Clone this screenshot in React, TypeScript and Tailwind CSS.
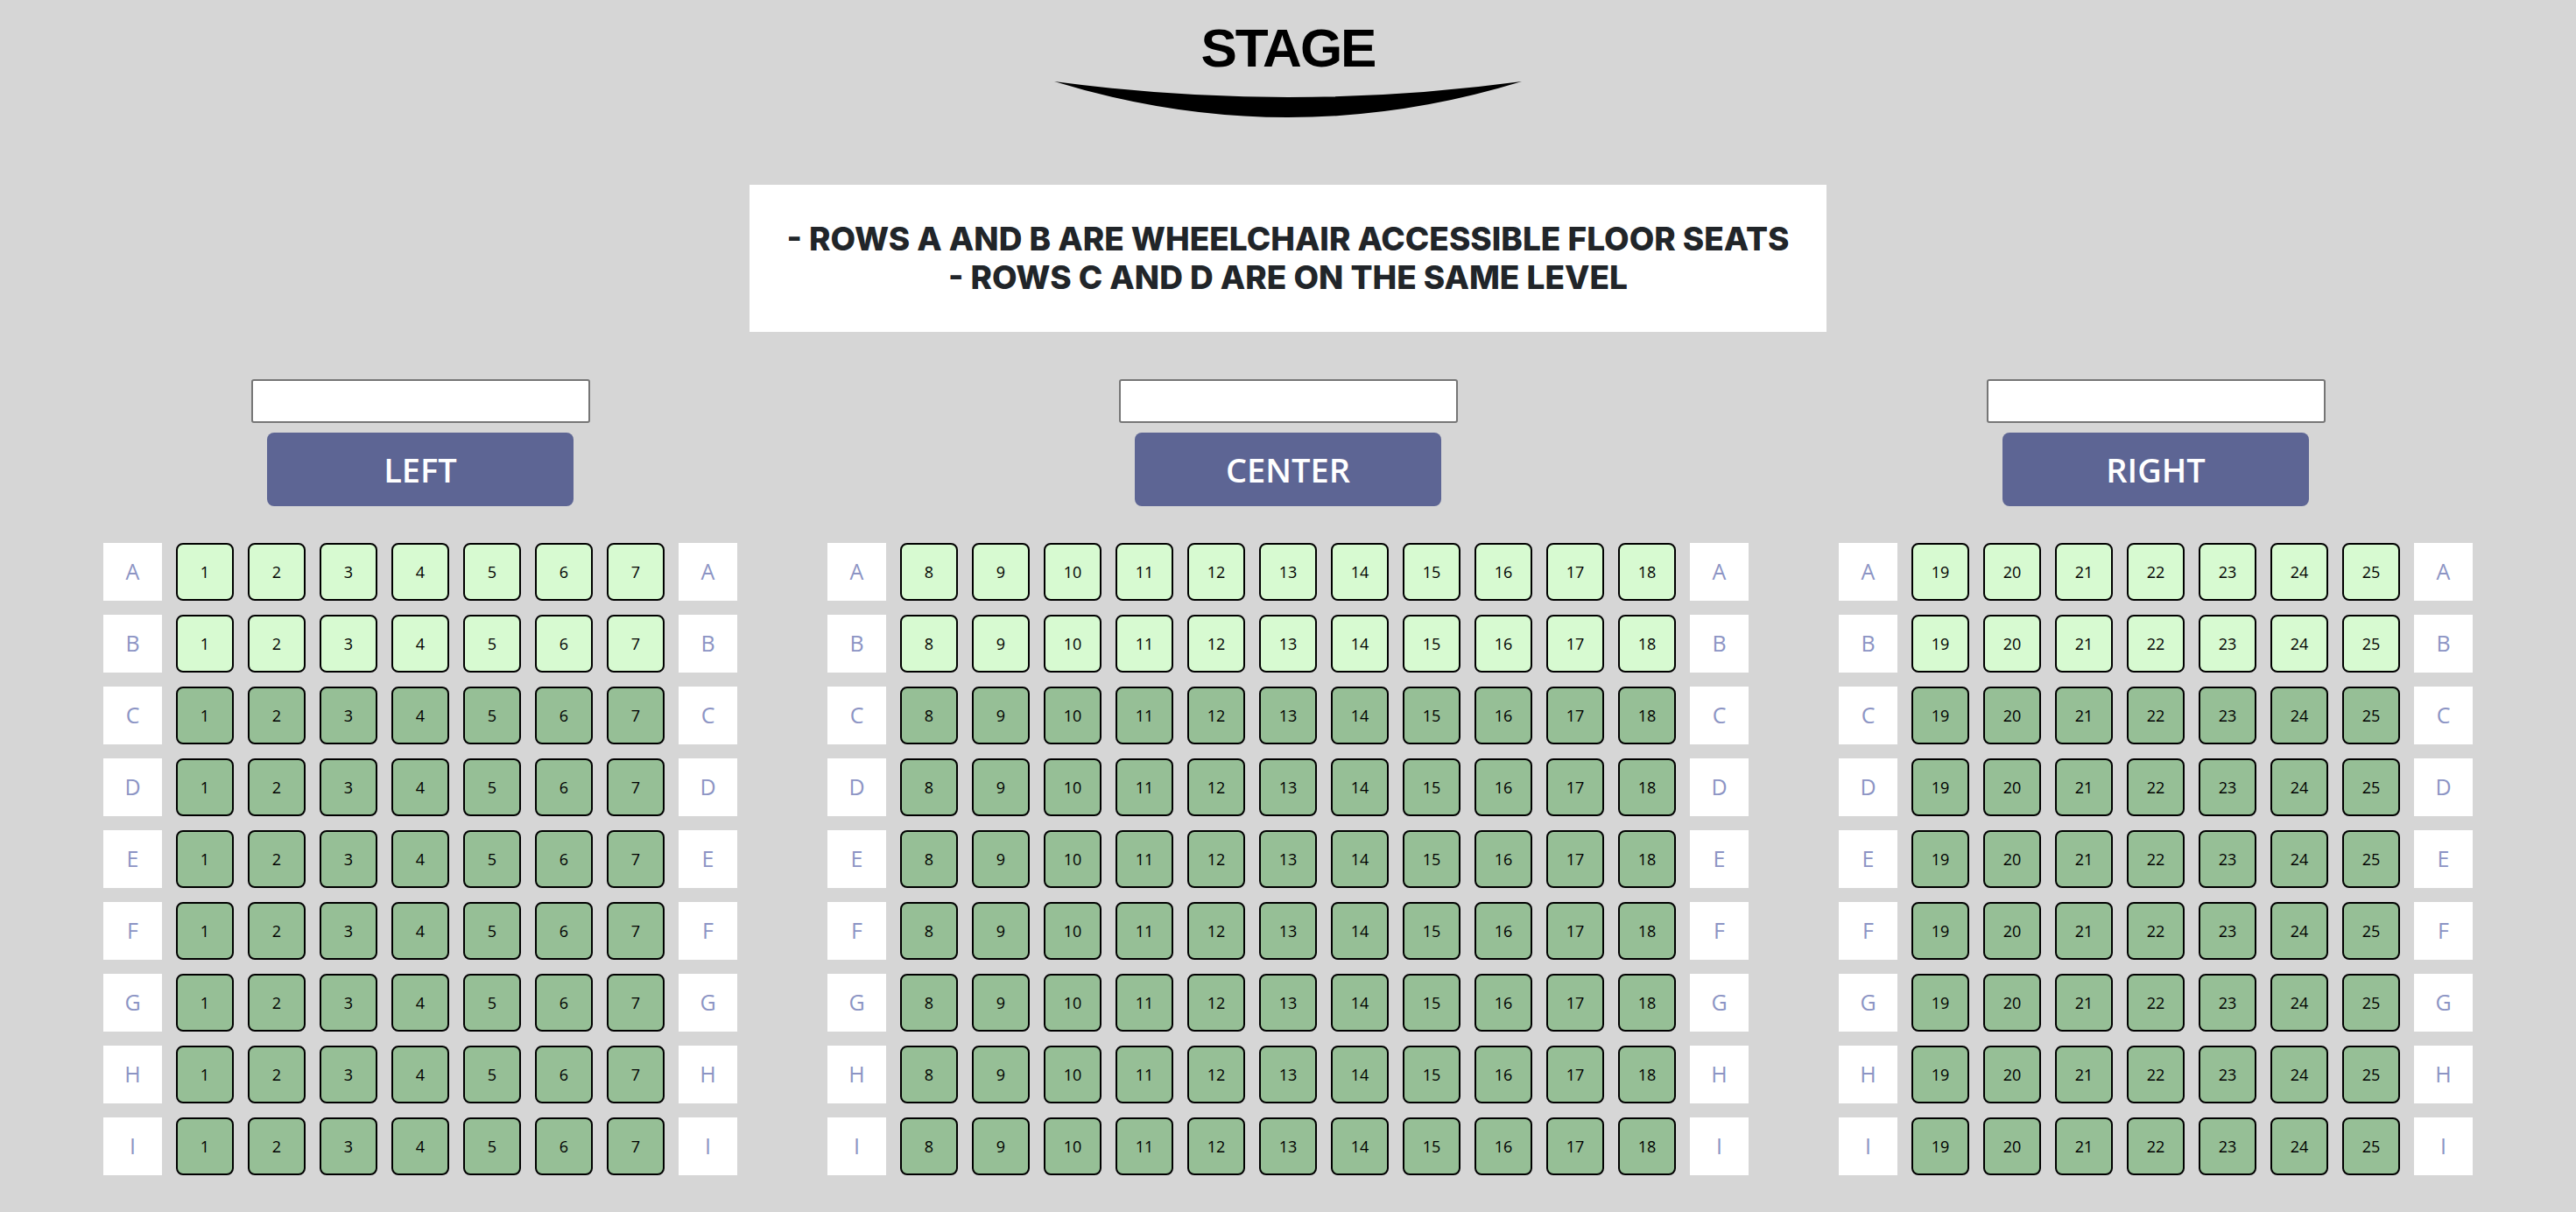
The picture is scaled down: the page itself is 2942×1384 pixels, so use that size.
import React from "react";

type Section = {
  name: string;
  seats: number[];
};

const rows = ["A", "B", "C", "D", "E", "F", "G", "H", "I"];
const accessible = ["A", "B"];

const range = (from: number, to: number) =>
  Array.from({ length: to - from + 1 }, (_, i) => from + i);

const sections: Section[] = [
  { name: "LEFT", seats: range(1, 7) },
  { name: "CENTER", seats: range(8, 18) },
  { name: "RIGHT", seats: range(19, 25) },
];

const RowLabel = ({ row }: { row: string }) => (
  <div className="w-[67px] h-[66px] bg-white flex items-center justify-center text-[25px] text-[#8c94c4] font-['Open_Sans',sans-serif]">
    {row}
  </div>
);

const Seat = ({ num, light }: { num: number; light: boolean }) => (
  <button
    className={`w-[66px] h-[66px] rounded-[8px] border-2 border-black flex items-center justify-center text-[18px] text-black font-['Open_Sans',sans-serif] ${
      light ? "bg-[#d7fad1]" : "bg-[#96bf96]"
    }`}
  >
    {num}
  </button>
);

const SeatSection = ({ section }: { section: Section }) => {
  return (
    <div className="flex flex-col items-center">
      <input
        type="text"
        className="w-[387px] h-[50px] bg-white border-2 border-[#767676] rounded-[3px]"
      />
      <button className="mt-[11px] w-[350px] h-[84px] rounded-[8px] bg-[#5d6594] text-white text-[38px] font-semibold font-['Open_Sans',sans-serif]">
        {section.name}
      </button>
      <div className="mt-[42px] flex flex-col gap-4">
        {rows.map((row) => (
          <div key={row} className="flex gap-4">
            <RowLabel row={row} />
            {section.seats.map((n) => (
              <Seat key={n} num={n} light={accessible.includes(row)} />
            ))}
            <RowLabel row={row} />
          </div>
        ))}
      </div>
    </div>
  );
};

export default function App() {
  return (
    <div className="min-h-screen w-full bg-[#d6d6d6] pt-[24px] pb-[42px]">
      <div className="flex flex-col items-center">
        <h1 className="text-[62px] leading-none font-bold tracking-[-2px] text-black font-['Liberation_Sans',Arial,sans-serif]">
          STAGE
        </h1>
        <svg width="540" height="46" viewBox="0 0 540 46" className="mt-[5px]">
          <path d="M 3 2 Q 270 84 537 2 Q 270 38 3 2 Z" fill="#000" />
        </svg>
      </div>

      <div className="mx-auto mt-[74px] w-[1230px] h-[168px] bg-white flex items-center justify-center">
        <p className="text-center text-[37px] leading-[44px] font-extrabold text-[#212529] font-['Inter',sans-serif]">
          - ROWS A AND B ARE WHEELCHAIR ACCESSIBLE FLOOR SEATS
          <br />
          - ROWS C AND D ARE ON THE SAME LEVEL
        </p>
      </div>

      <div className="mt-[54px] flex justify-center gap-[103px]">
        {sections.map((s) => (
          <SeatSection key={s.name} section={s} />
        ))}
      </div>
    </div>
  );
}
